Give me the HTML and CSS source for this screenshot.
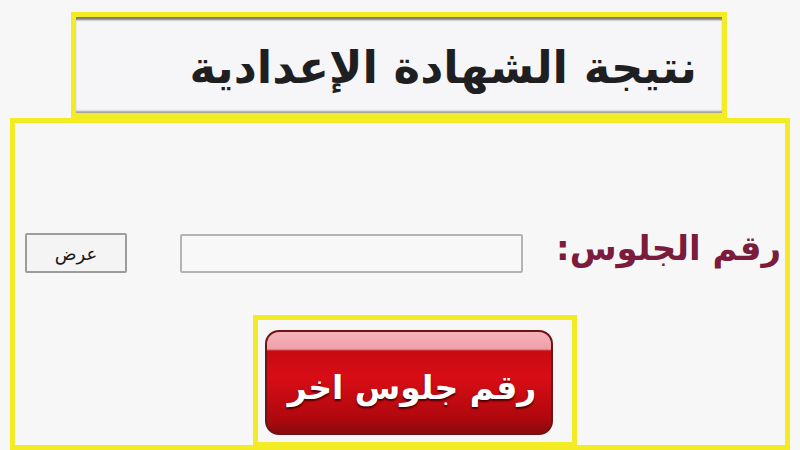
FILE: index.html
```html
<!DOCTYPE html>
<html lang="ar">
<head>
<meta charset="utf-8">
<link rel="stylesheet" href="styles.css">
</head>
<body>
<div class="page">
  <div class="title-box">
    <h1 class="title" dir="rtl">نتيجة الشهادة الإعدادية</h1>
  </div>
  <div class="main-box">
    <div class="row">
      <button class="show-btn" dir="rtl">عرض</button>
      <input class="seat-input" type="text">
      <label class="seat-label" dir="rtl">رقم الجلوس:</label>
    </div>
    <div class="red-frame">
      <div class="red-btn" dir="rtl">رقم جلوس اخر</div>
    </div>
  </div>
</div>
</body>
</html>
```
FILE: styles.css
```css
html, body {
  margin: 0;
  padding: 0;
  background: #f7f7f8;
  overflow: hidden;
}
.page {
  width: 800px;
  height: 450px;
  display: flex;
  flex-direction: column;
  font-family: "DejaVu Sans", sans-serif;
}
.title-box {
  box-sizing: border-box;
  margin: 12px 0 0 71px;
  width: 656px;
  height: 106px;
  border: 5px solid #f3ec24;
  background: #f6f6f8;
  box-shadow: inset 0 4px 2px -1px #7c7c78, inset 0 -3px 2px -1px #a0a09c;
  display: flex;
  align-items: center;
  justify-content: flex-end;
  padding-right: 25px;
}
.title {
  margin: 0;
  font-size: 45px;
  font-weight: bold;
  color: #1f1f22;
  line-height: 1;
  padding-top: 4px;
}
.main-box {
  box-sizing: border-box;
  margin: 0 10px;
  height: 332px;
  border: 5px solid #f3ec24;
  background: #f7f7f8;
  padding-top: 110px;
}
.row {
  display: flex;
  align-items: center;
  padding-left: 10px;
  height: 40px;
}
.show-btn {
  box-sizing: border-box;
  width: 102px;
  height: 40px;
  border: 2px solid #9c9c9c;
  border-radius: 2px;
  background: #f4f4f4;
  font-family: "DejaVu Sans", sans-serif;
  font-size: 18px;
  color: #1a1a1a;
  padding: 0;
}
.seat-input {
  box-sizing: border-box;
  margin-left: 53px;
  width: 343px;
  height: 39px;
  border: 2px solid #b4b4b4;
  border-radius: 2px;
  background: #f8f8f8;
}
.seat-label {
  flex: 1;
  text-align: right;
  padding-right: 4px;
  font-size: 34px;
  font-weight: bold;
  color: #7b1c3c;
  line-height: 1;
  padding-bottom: 10px;
}
.red-frame {
  box-sizing: border-box;
  margin: 42px 0 0 238px;
  width: 324px;
  height: 132px;
  border: 5px solid #f3ec24;
  padding: 10px 0 0 7px;
}
.red-btn {
  box-sizing: border-box;
  width: 288px;
  height: 105px;
  border: 2px solid #6e1414;
  border-radius: 14px;
  background: linear-gradient(#f5b3b9 0, #f0a0a8 17px, #c80a12 19px, #d80d16 45%, #b0080e 85%, #8a0a0c 100%);
  color: #fff;
  font-size: 33px;
  font-weight: bold;
  display: flex;
  align-items: center;
  justify-content: center;
  padding-top: 10px;
  padding-left: 6px;
  text-shadow: 0 2px 2px #4a0000;
}
```
